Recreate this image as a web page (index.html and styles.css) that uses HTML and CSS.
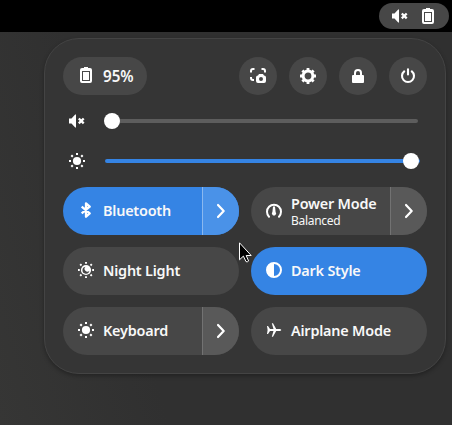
FILE: index.html
```html
<!DOCTYPE html>
<html lang="en">
<head>
<meta charset="utf-8">
<title>Quick Settings</title>
<link rel="stylesheet" href="styles.css">
</head>
<body>
<svg class="defs" aria-hidden="true">
  <symbol id="mute" viewBox="0 0 16 16"><path d="M0 5.500v5h2.500l3.700 4.100H7V1.400h-.8L2.500 5.500z"/><path class="line" d="M9.800 5.500l4.900 4.900M14.700 5.500l-4.900 4.900" stroke-width="2.300"/></symbol>
  <symbol id="battery" viewBox="0 0 16 16"><path fill-rule="evenodd" d="M6 0h4v1h2a2 2 0 0 1 2 2v11a2 2 0 0 1-2 2H4a2 2 0 0 1-2-2V3a2 2 0 0 1 2-2h2zM4 4v10h8V4z"/><path d="M5 5h6v8H5z"/></symbol>
  <symbol id="shot" viewBox="0 0 16 16"><path class="line" d="M1 4.500V3a2 2 0 0 1 2-2h1.500M11.500 1H13a2 2 0 0 1 2 2v1.500M1 9v1a2 2 0 0 0 2 2h1" stroke-width="2"/><path fill-rule="evenodd" d="M9 6h4l1 1.500a2 2 0 0 1 2 2V13a2 2 0 0 1-2 2H8a2 2 0 0 1-2-2V9.500a2 2 0 0 1 2-2zM11 9a2 2 0 1 0 0 4 2 2 0 0 0 0-4z"/></symbol>
  <symbol id="gear" viewBox="0 0 16 16"><circle class="line" cx="8" cy="8" r="4.900" stroke-width="3"/><path class="line" d="M8 0v3M8 13v3M0 8h3M13 8h3M2.400 2.400l2 2M11.600 11.600l2 2M13.600 2.400l-2 2M4.400 11.600l-2 2" stroke-width="2.800"/></symbol>
  <symbol id="lock" viewBox="0 0 16 16"><path class="line" d="M5 8V5a3 3 0 0 1 6 0v3" stroke-width="2"/><rect x="2" y="7" width="12" height="8" rx="1"/></symbol>
  <symbol id="power" viewBox="0 0 16 16"><path class="line" d="M4.200 3.400a6 6 0 1 0 7.600 0M8 1.200v5.300" stroke-width="2.100" stroke-linecap="round"/></symbol>
  <symbol id="sun" viewBox="0 0 16 16"><circle cx="8" cy="8" r="4.100"/><path class="line" d="M8 0v2M8 14v2M0 8h2M14 8h2M2.300 2.300l1.500 1.500M12.200 12.200l1.500 1.500M13.700 2.300l-1.500 1.500M3.800 12.200l-1.500 1.500" stroke-width="2"/></symbol>
  <symbol id="night" viewBox="0 0 16 16"><circle cx="8" cy="8" r="5.100"/><path class="moon" d="M7.500 4.700A3.500 3.500 0 1 0 11.400 8.800 2.800 2.800 0 0 1 7.500 4.700z"/><path class="line" d="M8 0v1.800M8 14.200V16M0 8h1.800M14.200 8H16M2.200 2.200l1.300 1.300M12.500 12.500l1.300 1.300M13.800 2.200l-1.300 1.300M3.500 12.500l-1.300 1.300" stroke-width="1.900"/></symbol>
  <symbol id="bluetooth" viewBox="0 0 16 16"><path class="line" d="M3.700 4.700l8 6.600L8 14.700V1.300l3.700 3.400-8 6.600" stroke-width="2.300" stroke-linejoin="round"/></symbol>
  <symbol id="gauge" viewBox="0 0 16 16"><path class="line" d="M3 13.700A7 7 0 1 1 13 13.700" stroke-width="2" stroke-linecap="round"/><path d="M7 3.500h2l.6 5.500a2.100 2.100 0 1 1-3.200 0z"/></symbol>
  <symbol id="contrast" viewBox="0 0 16 16"><circle class="line" cx="8" cy="8" r="7" stroke-width="2"/><path d="M8 1v14A7 7 0 0 1 8 1z"/></symbol>
  <symbol id="plane" viewBox="0 0 16 16"><path d="M1 4h1l2 3h3.500L5.800 1.200H7L10.200 7h3.800q1.300.4 1.300 1t-1.300 1h-3.800L7 14.800H5.800L7.500 9H4l-2 3H1l.6-4z"/></symbol>
  <symbol id="chevron" viewBox="0 0 16 16"><path class="line" d="M5 2l5.700 6L5 14" stroke-width="2.200" stroke-linecap="round" stroke-linejoin="round"/></symbol>
</svg>

<header class="topbar">
  <div class="indicators"><svg class="icon"><use href="#mute"/></svg><svg class="icon"><use href="#battery"/></svg></div>
</header>

<main class="panel">
  <div class="actions">
    <div class="charge"><svg class="icon"><use href="#battery"/></svg><span>95%</span></div>
    <div class="round"><svg class="icon"><use href="#shot"/></svg></div>
    <div class="round"><svg class="icon"><use href="#gear"/></svg></div>
    <div class="round"><svg class="icon"><use href="#lock"/></svg></div>
    <div class="round"><svg class="icon"><use href="#power"/></svg></div>
  </div>
  <div class="slider volume"><svg class="icon"><use href="#mute"/></svg><div class="track"><i class="knob"></i></div></div>
  <div class="slider brightness"><svg class="icon"><use href="#sun"/></svg><div class="track"><i class="knob"></i></div></div>
  <div class="tiles">
    <div class="tile active"><div class="main"><svg class="icon"><use href="#bluetooth"/></svg><span>Bluetooth</span></div><div class="more"><svg class="icon"><use href="#chevron"/></svg></div></div>
    <div class="tile"><div class="main"><svg class="icon gauge"><use href="#gauge"/></svg><div class="labels"><span>Power Mode</span><small>Balanced</small></div></div><div class="more"><svg class="icon"><use href="#chevron"/></svg></div></div>
    <div class="tile"><div class="main"><svg class="icon"><use href="#night"/></svg><span>Night Light</span></div></div>
    <div class="tile active"><div class="main"><svg class="icon"><use href="#contrast"/></svg><span>Dark Style</span></div></div>
    <div class="tile"><div class="main"><svg class="icon"><use href="#sun"/></svg><span>Keyboard</span></div><div class="more"><svg class="icon"><use href="#chevron"/></svg></div></div>
    <div class="tile"><div class="main"><svg class="icon"><use href="#plane"/></svg><span>Airplane Mode</span></div></div>
  </div>
</main>
<svg class="cursor" viewBox="0 0 14 22"><path d="M.5.8v17l3.900-3.700 2.600 5.500q1.200.8 2.600-.6L7.200 13.500h5z" fill="#000" stroke="#fff" stroke-width="1"/></svg>
</body>
</html>
```
FILE: styles.css
```css
* { box-sizing: border-box; }
body {
  margin: 0;
  height: 425px;
  overflow: hidden;
  background: linear-gradient(75deg, #363635 0, #303030 30%, #303030 100%);
  color: #f8f8f8;
  font: 600 14.4px/20px "Noto Sans", sans-serif;
}
.defs { display: none; }
.line { fill: none; stroke: currentColor; }
.moon { fill: #474747; }
.icon { width: 16px; height: 16px; flex: none; fill: currentColor; color: #fff; display: block; }
.topbar { height: 32px; background: #000; padding: 3px 3px 3px 0; display: flex; justify-content: flex-end; }
.indicators { width: 70px; height: 26px; border-radius: 13px; background: #474747; display: flex; align-items: center; justify-content: center; gap: 12px; }
.panel {
  width: 402px;
  height: 336px;
  margin: 6px 6px 0 44px;
  padding: 18px;
  border: 1px solid #444;
  border-radius: 35px;
  background: #353535;
  box-shadow: 0 2px 4px rgba(0, 0, 0, .3);
}
.actions { display: flex; gap: 12px; height: 38px; }
.charge { width: 84px; margin-right: auto; padding-left: 15px; border-radius: 19px; background: #474747; display: flex; align-items: center; gap: 9px; font-size: 15.2px; }
.charge .icon { margin-bottom: 2px; }
.round { width: 38px; border-radius: 50%; background: #474747; display: flex; align-items: center; justify-content: center; }
.slider { display: flex; align-items: center; height: 40px; padding: 0 9px 0 6px; gap: 20px; }
.volume { margin-top: 6px; }
.track { flex: 1; height: 4px; border-radius: 2px; background: #5d5d5d; display: flex; align-items: center; }
.knob { width: 16px; height: 16px; border-radius: 50%; background: #fff; margin-left: -1px; }
.brightness .track { background: #3584e4; justify-content: flex-end; margin-right: -2px; }
.brightness .knob { margin-right: 1px; }
.tiles { margin-top: 6px; display: grid; grid-template-columns: 176px 176px; grid-auto-rows: 48px; gap: 12px; }
.tile { border-radius: 24px; background: #474747; display: flex; overflow: hidden; }
.main { flex: 1; min-width: 0; padding-left: 15px; display: flex; align-items: center; gap: 9px; white-space: nowrap; letter-spacing: -.2px; }
.main .icon { margin-bottom: 2px; }
.main .gauge { margin: 0; }
.labels { display: flex; flex-direction: column; }
small { margin: -1px 0 1px; font-size: 12px; font-weight: 400; line-height: 15px; letter-spacing: -.3px; }
.more { width: 37px; border-left: 1px solid #727272; background: #595959; display: flex; align-items: center; justify-content: center; }
.active { background: #3584e4; }
.active .more { background: #4a92e8; border-color: #8ab8ef; }
.cursor { position: absolute; left: 239px; top: 242px; width: 14px; height: 22px; }
```
